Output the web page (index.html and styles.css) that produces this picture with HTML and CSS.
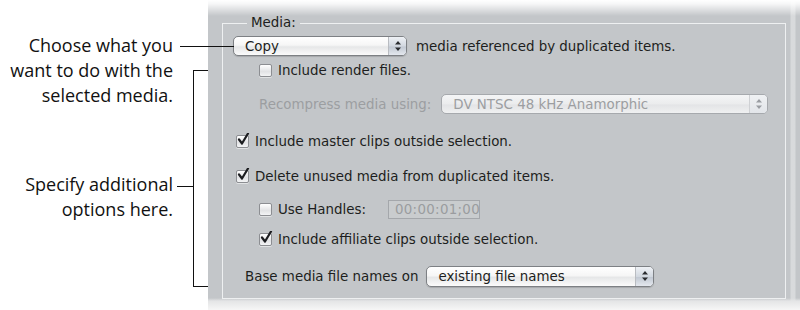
FILE: index.html
```html
<!DOCTYPE html>
<html>
<head>
<meta charset="utf-8">
<link rel="stylesheet" href="styles.css">
</head>
<body>
<div class="page">
  <div class="notes">
    <p class="note note-first">Choose what you<br>want to do with the<br>selected media.</p>
    <p class="note note-second">Specify additional<br>options here.</p>
    <span class="leader leader-copy"></span>
    <span class="bracket"></span>
    <span class="leader leader-options"></span>
  </div>
  <div class="panel">
    <fieldset class="group">
      <legend class="group-title">Media:</legend>
      <div class="row row-copy">
        <div class="popup popup-copy"><span class="popup-label">Copy</span><span class="popup-arrows"><svg viewBox="0 0 8 12" width="8" height="12"><path d="M4 1 L7 4.5 L1 4.5 Z M4 11 L7 7.5 L1 7.5 Z" fill="#2a2c30"/></svg></span></div>
        <span class="label">media referenced by duplicated items.</span>
      </div>
      <div class="row row-render indent">
        <span class="check"></span><span class="label">Include render files.</span>
      </div>
      <div class="row row-recompress indent disabled">
        <span class="label">Recompress media using:</span>
        <div class="popup popup-recompress"><span class="popup-label">DV NTSC 48 kHz Anamorphic</span><span class="popup-arrows"><svg viewBox="0 0 8 12" width="8" height="12"><path d="M4 1 L7 4.5 L1 4.5 Z M4 11 L7 7.5 L1 7.5 Z" fill="#9a9da2"/></svg></span></div>
      </div>
      <div class="row row-master">
        <span class="check checked"><svg viewBox="0 0 14 14" width="14" height="14"><path d="M3 6.5 L6 10.5 L12 0.5" fill="none" stroke="#1c1d20" stroke-width="2.2" stroke-linecap="round" stroke-linejoin="round"/></svg></span><span class="label">Include master clips outside selection.</span>
      </div>
      <div class="row row-delete">
        <span class="check checked"><svg viewBox="0 0 14 14" width="14" height="14"><path d="M3 6.5 L6 10.5 L12 0.5" fill="none" stroke="#1c1d20" stroke-width="2.2" stroke-linecap="round" stroke-linejoin="round"/></svg></span><span class="label">Delete unused media from duplicated items.</span>
      </div>
      <div class="row row-handles indent">
        <span class="check"></span><span class="label">Use Handles:</span>
        <span class="timecode">00:00:01;00</span>
      </div>
      <div class="row row-affiliate indent">
        <span class="check checked"><svg viewBox="0 0 14 14" width="14" height="14"><path d="M3 6.5 L6 10.5 L12 0.5" fill="none" stroke="#1c1d20" stroke-width="2.2" stroke-linecap="round" stroke-linejoin="round"/></svg></span><span class="label">Include affiliate clips outside selection.</span>
      </div>
      <div class="row row-base">
        <span class="label">Base media file names on</span>
        <div class="popup popup-base"><span class="popup-label">existing file names</span><span class="popup-arrows"><svg viewBox="0 0 8 12" width="8" height="12"><path d="M4 1 L7 4.5 L1 4.5 Z M4 11 L7 7.5 L1 7.5 Z" fill="#2a2c30"/></svg></span></div>
      </div>
    </fieldset>
  </div>
</div>
</body>
</html>
```

FILE: styles.css
```css
html, body {
  margin: 0;
  padding: 0;
  background: #ffffff;
}

.page {
  display: flex;
  width: 800px;
  height: 310px;
  overflow: hidden;
}

/* ---------- annotations ---------- */
.notes {
  position: relative;
  width: 208px;
  flex: none;
  font-family: "Open Sans", "Liberation Sans", sans-serif;
  font-size: 18px;
  color: #111;
}

.note {
  margin: 0;
  padding-right: 35px;
  text-align: right;
  line-height: 25px;
  letter-spacing: 0;
}

.note-first {
  padding-top: 33px;
}

.note-second {
  margin-top: 64px;
}

.leader {
  position: absolute;
  height: 1px;
  background: #111;
}

.leader-copy {
  top: 46px;
  left: 180px;
  width: 54px;
  z-index: 2;
}

.leader-options {
  top: 186px;
  left: 177px;
  width: 16px;
}

.bracket {
  position: absolute;
  top: 70px;
  left: 193px;
  width: 15px;
  height: 215px;
  border: 1px solid #111;
  border-right: none;
}

/* ---------- panel ---------- */
.panel {
  flex: 1;
  position: relative;
  padding: 16px 0 0 14px;
  font-family: "DejaVu Sans", "Liberation Sans", sans-serif;
  font-size: 13.4px;
  color: #1d1e20;
  background:
    linear-gradient(to bottom, #ffffff 0px, rgba(255,255,255,0.85) 4px, rgba(255,255,255,0) 16px),
    linear-gradient(to bottom, rgba(255,255,255,0) 298px, #e4e5e6 301px, #f6f6f6 310px),
    linear-gradient(to right, rgba(255,255,255,0) 582px, rgba(255,255,255,0.35) 583px, rgba(255,255,255,0.35) 587px, rgba(255,255,255,0) 588px),
    #c3c6c9;
}

.group {
  width: 564px;
  margin: 0;
  padding: 0 0 10px 13px;
  border: 1px solid #eef0f1;
  box-sizing: border-box;
  height: 283px;
}

.group-title {
  margin-left: 11px;
  padding: 0 4px;
  line-height: 14px;
  font-size: 13.4px;
}

.row {
  display: flex;
  align-items: center;
  height: 22px;
  white-space: nowrap;
}

.indent {
  margin-left: 23px;
}

.row-copy { margin-top: 5px; margin-left: -3px; }
.row-render { margin-top: 2px; }
.row-recompress { margin-top: 12px; }
.row-master { margin-top: 15px; }
.row-delete { margin-top: 13px; }
.row-handles { margin-top: 11px; }
.row-affiliate { margin-top: 8px; }
.row-base { margin-top: 15px; margin-left: 9px; }

.disabled .label {
  color: #9c9ea1;
}

/* ---------- checkbox ---------- */
.check {
  position: relative;
  flex: none;
  width: 11px;
  height: 11px;
  margin-right: 6px;
  border: 1px solid #8c8e92;
  border-radius: 2px;
  background: linear-gradient(to bottom, #ffffff, #e2e3e5 60%, #f3f4f5);
  box-shadow: 0 1px 0 rgba(255,255,255,0.5);
}

.check svg {
  position: absolute;
  left: -1px;
  top: -3px;
}

/* ---------- popups ---------- */
.popup {
  display: flex;
  align-items: stretch;
  box-sizing: border-box;
  height: 20px;
  border: 1px solid #7d8084;
  border-radius: 5px;
  background: linear-gradient(to bottom, #ffffff 0%, #f6f6f6 45%, #e6e7e8 55%, #fbfbfb 100%);
  box-shadow: 0 1px 1px rgba(0,0,0,0.15);
  overflow: hidden;
}

.popup-label {
  flex: 1;
  display: flex;
  align-items: center;
  padding-left: 11px;
}

.popup-arrows {
  flex: none;
  width: 17px;
  display: flex;
  align-items: center;
  justify-content: center;
  border-left: 1px solid #b9bcc1;
  background: linear-gradient(to bottom, #eef1f5 0%, #d2d8e0 50%, #c2c9d3 55%, #e4e8ee 100%);
}

.popup-copy {
  width: 174px;
  margin-right: 9px;
}

.popup-recompress {
  width: 327px;
  margin-left: 10px;
  border-color: #a6a9ad;
  background: linear-gradient(to bottom, #f4f5f6 0%, #ebeced 50%, #e3e4e6 55%, #eff0f1 100%);
  color: #9c9ea1;
  box-shadow: none;
}

.popup-recompress .popup-arrows {
  border-left-color: #cfd1d4;
  background: linear-gradient(to bottom, #eff1f3, #e2e5e9);
}

.popup-base {
  width: 228px;
  margin-left: 8px;
  height: 21px;
}

.timecode {
  box-sizing: border-box;
  width: 92px;
  height: 19px;
  margin-left: 22px;
  padding-left: 6px;
  border: 1px solid #a4a7ab;
  background: #c9ccce;
  color: #9a9c9f;
  line-height: 17px;
  letter-spacing: 0.3px;
}
```
